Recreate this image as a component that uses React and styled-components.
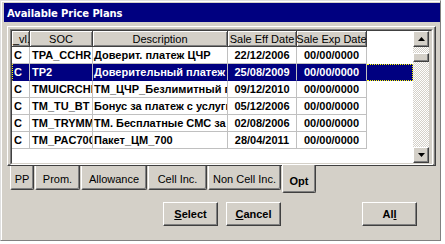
import React from "react";
import styled, { createGlobalStyle, css } from "styled-components";

const FACE = "#d4d0c8";
const NAVY = "#000080";

const GlobalStyle = createGlobalStyle`
  html, body { margin: 0; padding: 0; background: #ffffff; }
  body { font-family: "Liberation Sans", Arial, sans-serif; }
  * { box-sizing: border-box; }
`;

const raised = css`
  background: ${FACE};
  border: 1px solid;
  border-color: #ffffff #404040 #404040 #ffffff;
  box-shadow: inset -1px -1px #808080;
`;

const Window = styled.div`
  width: 441px;
  height: 241px;
  background: ${FACE};
  border: 1px solid;
  border-color: #dfdfdf #808080 #808080 #dfdfdf;
  box-shadow: inset 1px 1px #ffffff;
  padding: 2px 0 0 3px;
  display: flex;
  flex-direction: column;
`;

const TitleBar = styled.div`
  height: 19px;
  background: ${NAVY};
  color: #ffffff;
  font: bold 10px "DejaVu Sans", sans-serif;
  letter-spacing: -0.1px;
  display: flex;
  align-items: center;
  padding: 1px 0 0 3px;
`;

const Body = styled.div`
  padding: 4px 0 0 3px;
  display: flex;
  flex-direction: column;
`;

const TabPanel = styled.div`
  width: 429px;
  height: 140px;
  border: 1px solid;
  border-color: #ffffff #404040 #404040 #ffffff;
  box-shadow: inset -1px -1px #808080;
  padding: 2px 2px 0 2px;
  display: flex;
`;

const GridOuter = styled.div`
  flex: 1;
  border: 1px solid;
  border-color: #808080 #ffffff #ffffff #808080;
  display: flex;
`;

const GridInner = styled.div`
  flex: 1;
  border: 1px solid;
  border-color: #404040 ${FACE} ${FACE} #404040;
  display: flex;
  background: #ffffff;
`;

const Table = styled.div`
  flex: 1;
  display: flex;
  flex-direction: column;
  overflow: hidden;
  font-size: 11px;
`;

const HeaderRow = styled.div`
  display: flex;
  height: 16px;
  flex: none;
`;

const HeaderCell = styled.div`
  width: ${(p) => p.$w}px;
  flex: none;
  height: 16px;
  background: ${FACE};
  border-right: 1px solid #404040;
  border-bottom: 1px solid #404040;
  box-shadow: inset 1px 1px #ffffff, inset -1px -1px #808080;
  display: flex;
  align-items: center;
  justify-content: ${(p) => (p.$left ? "flex-start" : "center")};
  padding: 0 ${(p) => (p.$left ? "0 0 1px" : "0")};
  white-space: nowrap;
  overflow: hidden;
  color: #000000;
  font-weight: normal;
`;

const Row = styled.div`
  display: flex;
  height: 17px;
  flex: none;
  font-weight: bold;
  color: ${(p) => (p.$sel ? "#ffffff" : "#000000")};
`;

const Cell = styled.div`
  width: ${(p) => p.$w}px;
  flex: none;
  height: 17px;
  border-right: 1px solid #c0c0c0;
  border-bottom: 1px solid ${(p) => (p.$sel ? NAVY : "#c0c0c0")};
  background: ${(p) => (p.$sel ? NAVY : "#ffffff")};
  display: flex;
  align-items: center;
  justify-content: ${(p) => (p.$center ? "center" : "flex-start")};
  padding-left: ${(p) => (p.$center ? 0 : p.$pad)}px;
  white-space: nowrap;
  overflow: hidden;
  ${(p) =>
    p.$focusLeft &&
    css`
      border-left: 1px dotted #ffff00;
      padding-left: ${p.$pad - 1}px;
    `}
`;

const Filler = styled.div`
  flex: 1;
  height: 17px;
  background: ${(p) => (p.$sel ? NAVY : "#ffffff")};
  ${(p) =>
    p.$sel &&
    css`
      border: 1px dotted #ffff00;
      border-left: none;
    `}
`;

const HeaderFiller = styled.div`
  flex: 1;
  background: #ffffff;
`;

const ScrollBar = styled.div`
  width: 18px;
  flex: none;
  padding-right: 2px;
  background: ${FACE};
  display: flex;
  flex-direction: column;
`;

const ScrollButton = styled.div`
  ${raised}
  width: 16px;
  height: 16px;
  flex: none;
  display: flex;
  align-items: center;
  justify-content: center;
`;

const Track = styled.div`
  flex: 1;
  background-color: #ffffff;
  background-image: conic-gradient(${FACE} 25%, #ffffff 0 50%, ${FACE} 0 75%, #ffffff 0);
  background-size: 2px 2px;
  display: flex;
  flex-direction: column;
`;

const Thumb = styled.div`
  ${raised}
  width: 16px;
  height: 9px;
  flex: none;
  margin-top: ${(p) => p.$offset}px;
`;

const TabRow = styled.div`
  display: flex;
  gap: 1px;
  padding-left: 3px;
  align-items: flex-start;
  height: 27px;
`;

const Tab = styled.div`
  width: ${(p) => p.$w}px;
  flex: none;
  height: ${(p) => (p.$active ? 28 : 24)}px;
  margin-top: ${(p) => (p.$active ? -1 : 0)}px;
  position: relative;
  z-index: ${(p) => (p.$active ? 1 : 0)};
  background: ${FACE};
  border-left: 1px solid #ffffff;
  border-right: 1px solid #404040;
  border-bottom: 1px solid #404040;
  border-radius: 0 0 2px 2px;
  box-shadow: inset -1px -1px #808080;
  font-size: 11px;
  font-weight: ${(p) => (p.$active ? "bold" : "normal")};
  color: #000000;
  display: flex;
  justify-content: center;
  align-items: center;
  padding-top: ${(p) => (p.$active ? 5 : 3)}px;
  white-space: nowrap;
`;

const ButtonRow = styled.div`
  display: flex;
  gap: 8px;
  margin-top: 9px;
  padding-left: 156px;
`;

const Button = styled.div`
  ${raised}
  width: 55px;
  height: 24px;
  margin-left: ${(p) => p.$ml || 0}px;
  font-size: 11px;
  font-weight: bold;
  color: #000000;
  display: flex;
  align-items: center;
  justify-content: center;
  padding-bottom: 1px;
`;

const Arrow = ({ down }) => (
  <svg width="7" height="4" viewBox="0 0 7 4">
    <polygon points={down ? "0,0 7,0 3.5,4" : "3.5,0 7,4 0,4"} fill="#000" />
  </svg>
);

const cols = [
  { key: "lvl", title: "_vl.", w: 18, pad: 2, left: true },
  { key: "soc", title: "SOC", w: 63, pad: 2 },
  { key: "desc", title: "Description", w: 135, pad: 1 },
  { key: "eff", title: "Sale Eff Date", w: 69, center: true },
  { key: "exp", title: "Sale Exp Date", w: 70, center: true },
];

const rows = [
  { lvl: "C", soc: "TPA_CCHR", desc: "Доверит. платеж ЦЧР", eff: "22/12/2006", exp: "00/00/0000" },
  { lvl: "C", soc: "TP2", desc: "Доверительный платеж ЦЧР", eff: "25/08/2009", exp: "00/00/0000", sel: true },
  { lvl: "C", soc: "TMUICRCHR", desc: "TM_ЦЧР_Безлимитный пакет", eff: "09/12/2010", exp: "00/00/0000" },
  { lvl: "C", soc: "TM_TU_BT", desc: "Бонус за платеж с услуги", eff: "05/12/2006", exp: "00/00/0000" },
  { lvl: "C", soc: "TM_TRYMMS", desc: "TM. Бесплатные СМС за", eff: "02/08/2006", exp: "00/00/0000" },
  { lvl: "C", soc: "TM_PAC700", desc: "Пакет_ЦМ_700", eff: "28/04/2011", exp: "00/00/0000" },
];

const tabs = [
  { label: "PP", w: 24 },
  { label: "Prom.", w: 45 },
  { label: "Allowance", w: 66 },
  { label: "Cell Inc.", w: 59 },
  { label: "Non Cell Inc.", w: 73 },
  { label: "Opt", w: 34, active: true },
];

export default function App() {
  return (
    <>
      <GlobalStyle />
      <Window>
        <TitleBar>Available Price Plans</TitleBar>
        <Body>
          <TabPanel>
            <GridOuter>
              <GridInner>
                <Table>
                  <HeaderRow>
                    {cols.map((c) => (
                      <HeaderCell key={c.key} $w={c.w} $left={c.left}>
                        {c.title}
                      </HeaderCell>
                    ))}
                    <HeaderFiller />
                  </HeaderRow>
                  {rows.map((r, i) => (
                    <Row key={i} $sel={r.sel}>
                      {cols.map((c, j) => (
                        <Cell
                          key={c.key}
                          $w={c.w}
                          $pad={c.pad || 0}
                          $center={c.center}
                          $sel={r.sel}
                          $focusLeft={r.sel && j === 0}
                        >
                          {r[c.key]}
                        </Cell>
                      ))}
                      <Filler $sel={r.sel} />
                    </Row>
                  ))}
                </Table>
                <ScrollBar>
                  <ScrollButton>
                    <Arrow />
                  </ScrollButton>
                  <Track>
                    <Thumb $offset={6} />
                  </Track>
                  <ScrollButton>
                    <Arrow down />
                  </ScrollButton>
                </ScrollBar>
              </GridInner>
            </GridOuter>
          </TabPanel>
          <TabRow>
            {tabs.map((t) => (
              <Tab key={t.label} $w={t.w} $active={t.active}>
                {t.label}
              </Tab>
            ))}
          </TabRow>
          <ButtonRow>
            <Button>
              <span>
                <u>S</u>elect
              </span>
            </Button>
            <Button>
              <span>
                <u>C</u>ancel
              </span>
            </Button>
            <Button $ml={73}>
              <span>
                Al<u>l</u>
              </span>
            </Button>
          </ButtonRow>
        </Body>
      </Window>
    </>
  );
}
